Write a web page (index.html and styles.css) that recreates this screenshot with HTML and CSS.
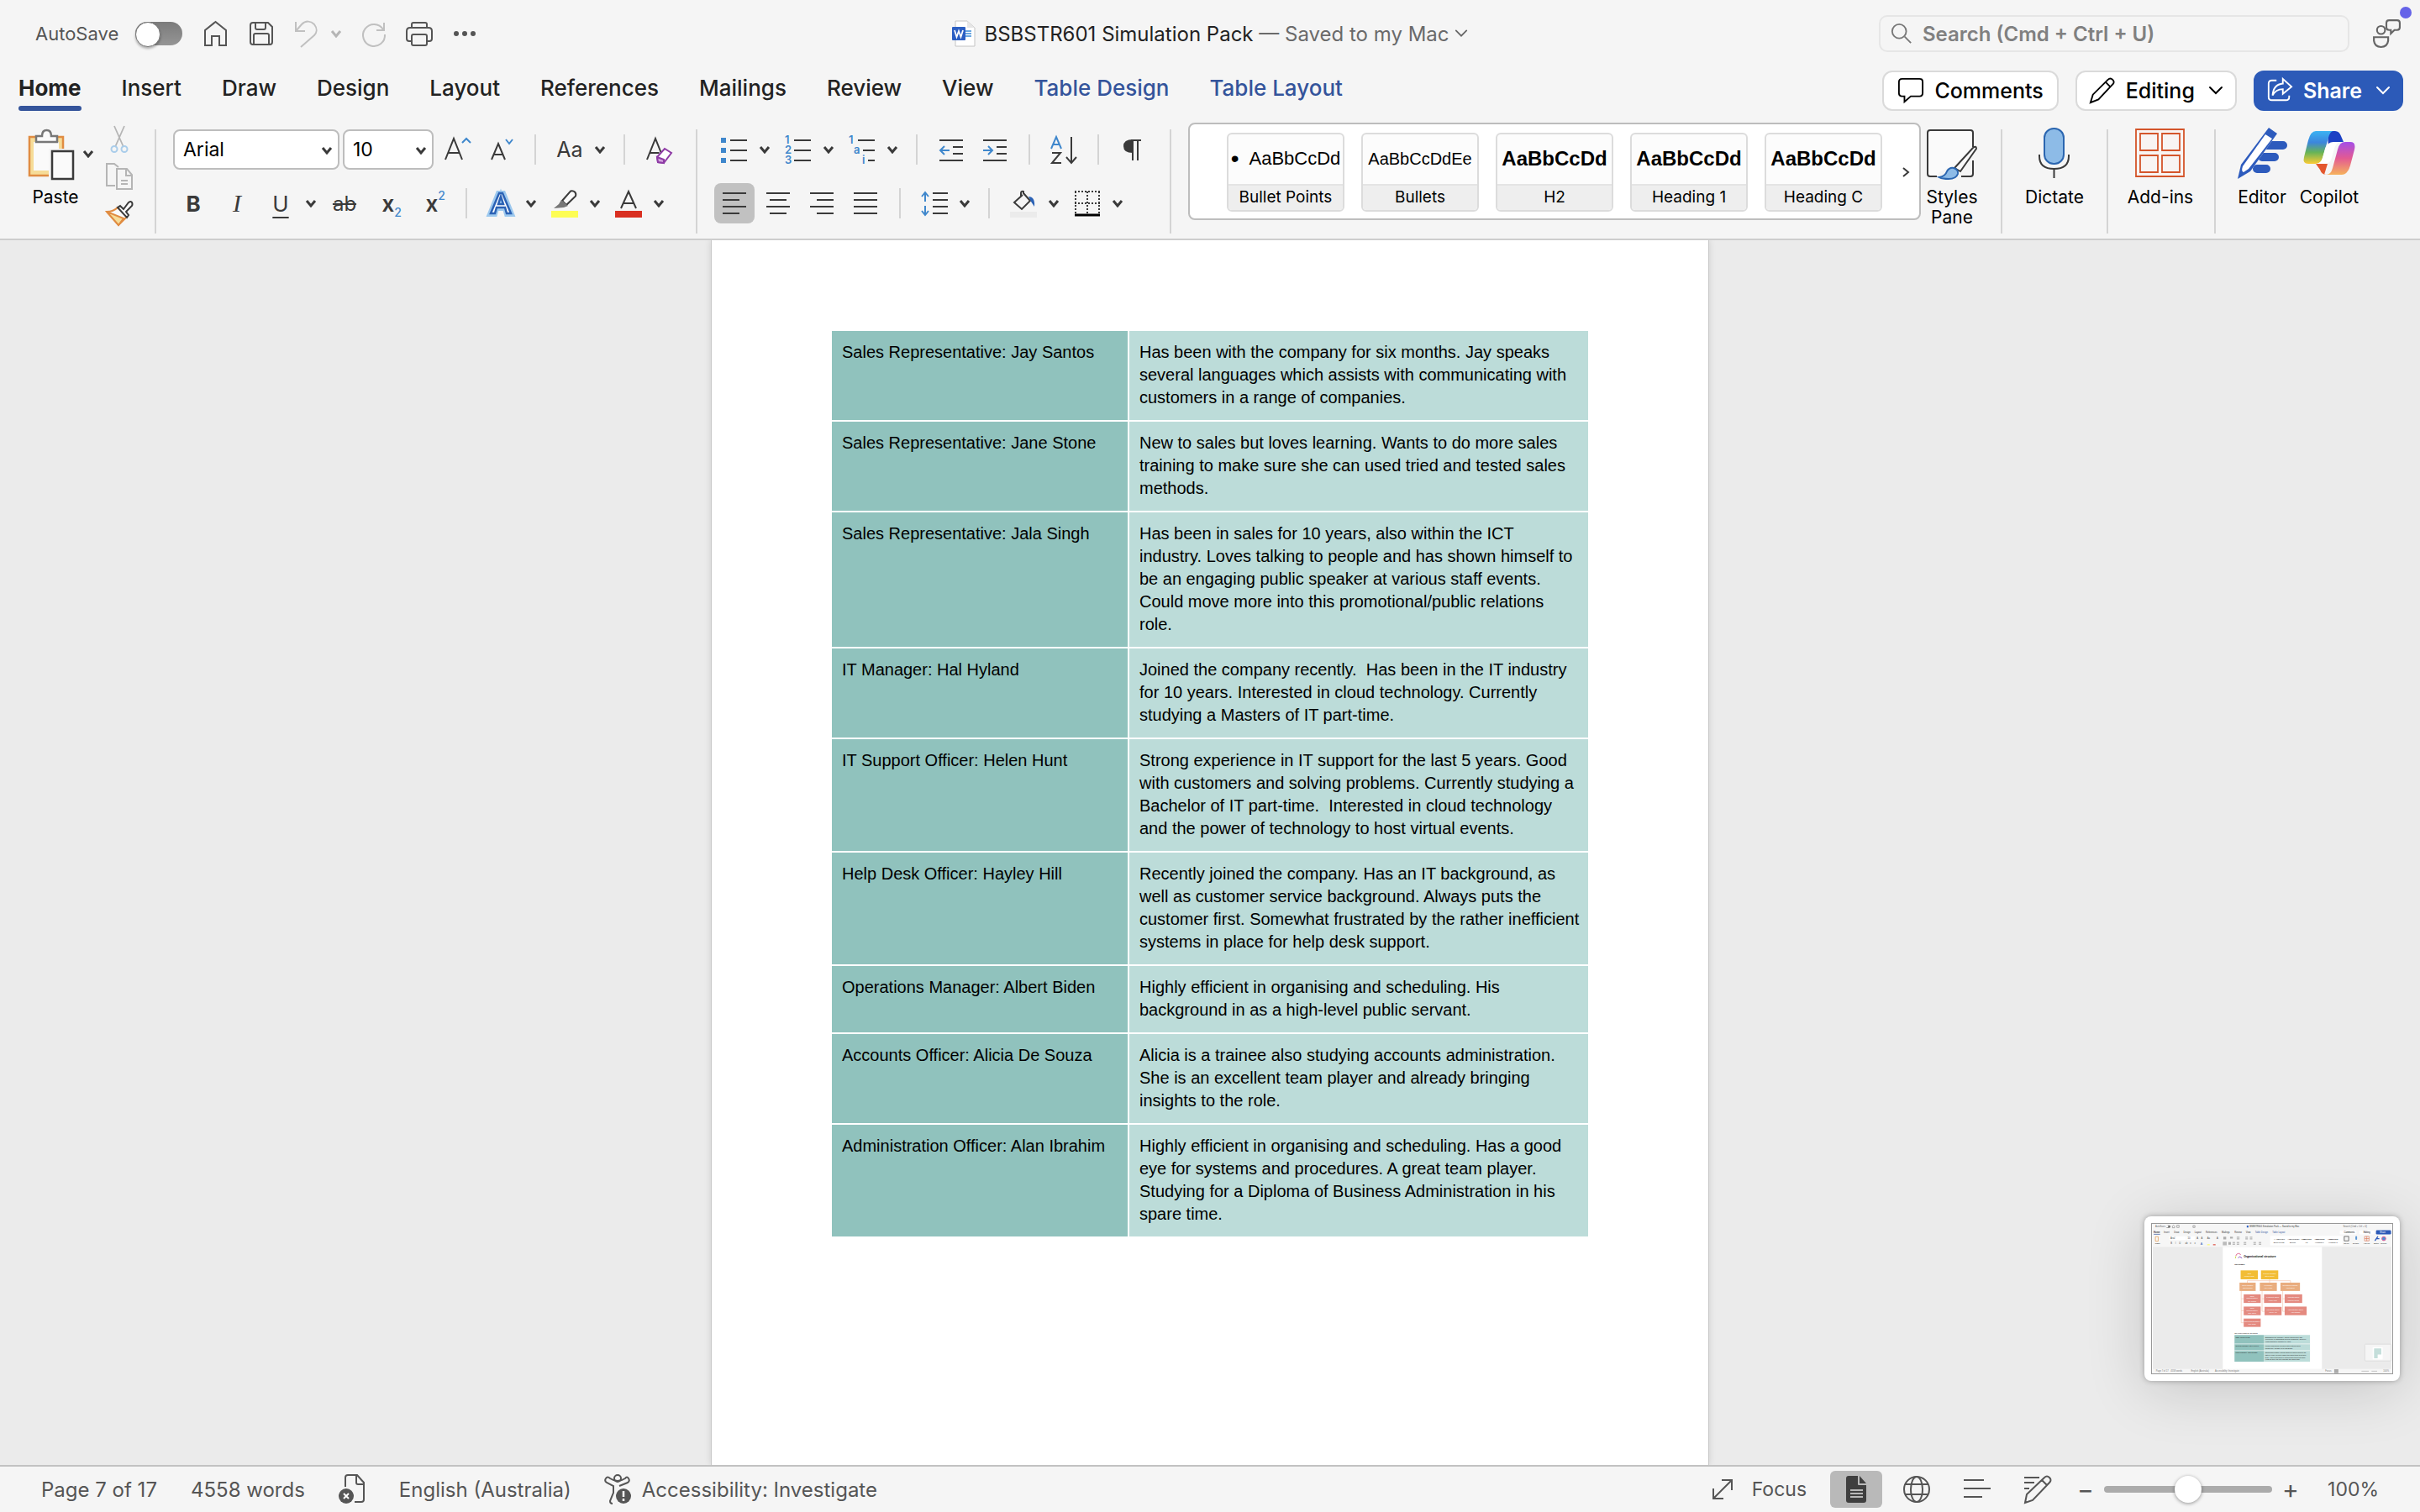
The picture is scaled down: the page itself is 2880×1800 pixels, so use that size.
FILE: index.html
```html
<!DOCTYPE html>
<html lang="en-AU">
<head>
<meta charset="UTF-8">
<meta name="viewport" content="width=device-width,initial-scale=1.0">
<title>BSBSTR601 Simulation Pack</title>
<link rel="stylesheet" href="styles.css">
</head>
<body>

<!-- shared symbols -->
<svg class="defs" width="0" height="0" aria-hidden="true">
  <symbol id="caret" viewBox="0 0 14 10"><path d="M2 2l5 6 5-6" fill="none" stroke="currentColor" stroke-width="3"/></symbol>
  <symbol id="chev" viewBox="0 0 18 12"><path d="M2 2l7 7 7-7" fill="none" stroke="currentColor" stroke-width="2" stroke-linecap="round"/></symbol>
</svg>

<header>
  <!-- ====== Title bar ====== -->
  <div class="titlebar">
    <div class="quick">
      <label class="autosave">AutoSave <input type="checkbox" class="toggle"></label>
      <button class="qbtn" aria-label="Home"><svg viewBox="0 0 32 32"><path d="M3 30V12L15.500 2 28 12v18h-8V19h-9v11z"/></svg></button>
      <button class="qbtn" aria-label="Save"><svg viewBox="0 0 32 32"><path d="M6 3h18l5 5v18q0 3-3 3H6q-3 0-3-3V6q0-3 3-3zM9 3v6q0 2 2 2h8q2 0 2-2V3M7 29V18q0-2 2-2h14q2 0 2 2v11"/></svg></button>
      <div class="undo">
        <button class="qbtn dim" aria-label="Undo"><svg viewBox="0 0 32 32"><path d="M3 2v11h11M3 13l7-8c5-5 11-4 15 0 4 5 3 10 0 13L9 32"/></svg></button>
        <button class="drop dim" aria-label="Undo history"><svg><use href="#caret"/></svg></button>
      </div>
      <button class="qbtn dim" aria-label="Redo"><svg viewBox="0 0 32 32"><path d="M28 3v9h-9M27 11A13 13 0 1 0 29 17"/></svg></button>
      <button class="qbtn" aria-label="Print"><svg viewBox="0 0 32 32"><path d="M7 9V5q0-2 2-2h14q2 0 2 2v4M7 25H4q-3 0-3-3v-9q0-4 4-4h22q4 0 4 4v9q0 3-3 3h-3M9 17h14q2 0 2 2v9q0 2-2 2H9q-2 0-2-2v-9q0-2 2-2z"/></svg></button>
      <button class="qbtn" aria-label="More"><svg viewBox="0 0 32 32" class="solid"><circle cx="6" cy="16" r="3"/><circle cx="16" cy="16" r="3"/><circle cx="26" cy="16" r="3"/></svg></button>
    </div>

    <button class="docname">
      <svg class="wordicon" viewBox="0 0 28 32"><path d="M4 1h14l9 8v22H4z" fill="#fff" stroke="#c4c4c4" stroke-width="1"/><path d="M18 1l9 8h-9z" fill="#e6e6e6" stroke="none"/><path d="M16 13h7M16 16h7M16 19h7" stroke="#3b8ad8" stroke-width="1.500"/><rect y="8" width="16" height="16" rx="1" fill="#2c5fc3" stroke="none"/><path d="M3 12l2.500 8L8 13l2.500 7L13 12" fill="none" stroke="#fff" stroke-width="1.800"/></svg>
      <span>BSBSTR601 Simulation Pack <i>— Saved to my Mac</i></span>
      <svg class="chev"><use href="#chev"/></svg>
    </button>

    <div class="right">
      <label class="search">
        <svg viewBox="0 0 28 28"><circle cx="11" cy="11" r="9"/><path d="M18 18l8 8"/></svg>
        <input type="text" placeholder="Search (Cmd + Ctrl + U)" aria-label="Search">
      </label>
      <button class="people" aria-label="Feedback">
        <svg viewBox="0 0 32 32"><circle cx="10" cy="12" r="4.500"/><path d="M2 20h16v4q-1 7-8 7t-8-7zM19 1h9q3 0 3 3v5q0 3-3 3h-3l-4 4v-4h-2q-3 0-3-3V4q0-3 3-3z"/></svg>
        <span class="dot"></span>
      </button>
    </div>
  </div>

  <!-- ====== Tabs ====== -->
  <div class="tabrow">
    <nav class="tabs">
      <a href="#" class="active">Home</a>
      <a href="#">Insert</a>
      <a href="#">Draw</a>
      <a href="#">Design</a>
      <a href="#">Layout</a>
      <a href="#">References</a>
      <a href="#">Mailings</a>
      <a href="#">Review</a>
      <a href="#">View</a>
      <a href="#" class="ctx">Table Design</a>
      <a href="#" class="ctx">Table Layout</a>
    </nav>
    <div class="actions">
      <button class="action comments"><svg viewBox="0 0 34 34"><path d="M6 2h22q4 0 4 4v14q0 4-4 4H17l-8 7v-7H6q-4 0-4-4V6q0-4 4-4z"/></svg>Comments</button>
      <button class="action editing"><svg viewBox="0 0 34 34"><path d="M2 32l3-10L24 3q3-3 6 0t0 6L12 28zM21 6l6 6"/></svg>Editing<svg class="chev"><use href="#chev"/></svg></button>
      <button class="action share"><svg viewBox="0 0 34 34"><path d="M13 4H7Q3 4 3 8v17q0 4 4 4h18q4 0 4-4v-2M21 2l11 10-11 9v-6q-9 0-13 8Q9 9 21 8z"/></svg>Share<svg class="chev"><use href="#chev"/></svg></button>
    </div>
  </div>

  <!-- ====== Ribbon ====== -->
  <div class="ribbon">
    <div class="clip">
      <div class="paste">
        <button class="big">
          <svg viewBox="0 0 56 60"><path d="M1 9h40v46H1z" fill="#f6dc98" stroke="#e08c42" stroke-width="2.500"/><path d="M6 15h30v34H6z" fill="#fafafa"/><path d="M9 15V8h7q0-7 5.500-7T27 8h7v7z" fill="#fafafa" stroke="#777" stroke-width="2.500"/><path d="M24 23h32v37H24z" fill="#f5f5f5"/><path d="M28 26h25v33H28z" fill="#fafafa" stroke="#3a3a3a" stroke-width="2.500"/></svg>
          <span>Paste</span>
        </button>
        <button class="drop" aria-label="Paste options"><svg><use href="#caret"/></svg></button>
      </div>
      <div class="clipcol">
        <button class="ic" aria-label="Cut"><svg viewBox="0 0 32 32"><path d="M10 0l11 25M22 0L11 25" stroke="#b5b5b5" stroke-width="1.800"/><g stroke="#aacdea"><circle cx="10" cy="27.500" r="3.500"/><circle cx="22" cy="27.500" r="3.500"/></g></svg></button>
        <button class="ic pale" aria-label="Copy"><svg viewBox="0 0 32 32"><path d="M11 27H1V1h9l5 4M13 7h12l6 7v17H13zM24 7v8h7M18 21h8M18 25h8"/></svg></button>
        <button class="ic" aria-label="Format painter"><svg viewBox="0 0 32 32"><path d="M1 14q8 0 13-5l11 11-10 10z" fill="#fafafa" stroke="#e08c42"/><path d="M1 14l20 8-6 8z" fill="#f6dc98" stroke="#e08c42"/><path d="M14 9l3-2 4 4 6-8q3-2 4 0t0 4l-7 7 3 4-2 3z" fill="#fafafa"/></svg></button>
      </div>
    </div>
    <div class="vsep first"></div>

    <div class="group font">
      <div class="row">
        <div class="combo fontname"><select aria-label="Font"><option>Arial</option></select><svg><use href="#caret"/></svg></div>
        <div class="combo fontsize"><select aria-label="Font size"><option>10</option></select><svg><use href="#caret"/></svg></div>
        <button class="ic first" aria-label="Increase font size"><svg viewBox="0 0 32 32"><path d="M2 28L12 3l10 25M5.500 20h13"/><path class="blue" d="M22 8l5-5 5 5"/></svg></button>
        <button class="ic" aria-label="Decrease font size"><svg viewBox="0 0 32 32"><path d="M5 28l8-19 8 19M8 22h10"/><path class="blue" d="M22 4l4 5 4-5"/></svg></button>
        <div class="sep"></div>
        <div class="split"><button class="ic glyph case">Aa</button><button class="drop" aria-label="Case options"><svg><use href="#caret"/></svg></button></div>
        <div class="sep"></div>
        <button class="ic" aria-label="Clear formatting"><svg viewBox="0 0 32 32"><path d="M2 28L12 3l8 20M5.500 20h11"/><path d="M14 25l9-10 8 5-9 12-7-1z" fill="#fff" stroke="#8e3ba5"/><path d="M14 25l8 3v4l-7-1z" fill="#d6a5e0" stroke="#8e3ba5"/></svg></button>
      </div>
      <div class="row indent">
        <button class="ic glyph bold">B</button>
        <button class="ic glyph ital">I</button>
        <div class="split"><button class="ic glyph under">U</button><button class="drop" aria-label="Underline style"><svg><use href="#caret"/></svg></button></div>
        <button class="ic glyph strike">ab</button>
        <button class="ic glyph script">x<sub>2</sub></button>
        <button class="ic glyph script">x<sup>2</sup></button>
        <div class="sep"></div>
        <div class="split"><button class="ic" aria-label="Text effects"><svg viewBox="0 0 32 32"><path d="M3 29L13 4h6l10 25h-6l-2-7H11l-2 7zM13 17h6l-3-9z" fill="#fff" stroke="#9cc8ee" stroke-width="6"/><path d="M4 28L14 4h4l10 24h-5l-2-7H11l-2 7zM13 17h6l-3-9z" fill="#fff" stroke="#2b62b5" stroke-width="2.500"/></svg></button><button class="drop" aria-label="Text effect options"><svg><use href="#caret"/></svg></button></div>
        <div class="split"><button class="ic" aria-label="Highlight"><svg viewBox="0 0 32 32"><path d="M13 13L23 1.500q3-1 5 1t1 5L18 18z" fill="#fafafa"/><path d="M12 12l8 7-5 2-12 1 6-5z" fill="#777" stroke="none"/><path d="M0 25h32v8H0z" fill="#fdfd54" stroke="none"/></svg></button><button class="drop" aria-label="Highlight colour"><svg><use href="#caret"/></svg></button></div>
        <div class="split"><button class="ic" aria-label="Font colour"><svg viewBox="0 0 32 32"><path d="M7 22L16 2l9 20M10 16h12"/><path d="M0 25h32v8H0z" fill="#d92f21" stroke="none"/></svg></button><button class="drop" aria-label="Font colour options"><svg><use href="#caret"/></svg></button></div>
      </div>
    </div>
    <div class="vsep wide"></div>

    <div class="group para">
      <div class="row">
        <div class="split"><button class="ic" aria-label="Bullets"><svg viewBox="0 0 32 32"><path d="M11 5h20M11 17h20M11 29h20"/><path d="M0 2h6v6H0zM0 14h6v6H0zM0 26h6v6H0z" fill="#3f87cc" stroke="none"/></svg></button><button class="drop" aria-label="Bullet library"><svg><use href="#caret"/></svg></button></div>
        <div class="split"><button class="ic" aria-label="Numbering"><svg viewBox="0 0 32 32"><path d="M11 5h20M11 17h20M11 29h20"/><g class="num"><text x="0" y="9">1</text><text x="0" y="21">2</text><text x="0" y="33">3</text></g></svg></button><button class="drop" aria-label="Number library"><svg><use href="#caret"/></svg></button></div>
        <div class="split"><button class="ic" aria-label="Multilevel list"><svg viewBox="0 0 32 32"><path d="M11 5h20M17 17h14M23 29h8"/><g class="num"><text x="0" y="9">1</text><text x="6" y="21">a</text><text x="16" y="33">i</text></g></svg></button><button class="drop" aria-label="List library"><svg><use href="#caret"/></svg></button></div>
        <div class="sep"></div>
        <button class="ic" aria-label="Decrease indent"><svg viewBox="0 0 32 32"><path d="M2 5h28M18 13h12M18 21h12M2 29h28"/><path class="blue" d="M14 17H3M8 12l-5 5 5 5"/></svg></button>
        <button class="ic" aria-label="Increase indent"><svg viewBox="0 0 32 32"><path d="M2 5h28M18 13h12M18 21h12M2 29h28"/><path class="blue" d="M2 17h11M8 12l5 5-5 5"/></svg></button>
        <div class="sep"></div>
        <button class="ic" aria-label="Sort"><svg viewBox="0 0 32 32"><path class="blue" d="M1 15L7 1l6 14M3 10h8"/><path d="M2 20h10L2 32h11M25 1v30M19 25l6 7 6-7"/></svg></button>
        <div class="sep"></div>
        <button class="ic" aria-label="Show formatting marks"><svg viewBox="0 0 32 32"><path d="M16 5v24M22 5v24M14 5h12"/><path d="M16 5q-10 0-10 7t10 7z" fill="#3a3a3a"/></svg></button>
      </div>
      <div class="row">
        <button class="ic active" aria-label="Align left"><svg viewBox="0 0 32 32"><path d="M2 4h28M2 12h20M2 20h28M2 28h20"/></svg></button>
        <button class="ic" aria-label="Align centre"><svg viewBox="0 0 32 32"><path d="M2 4h28M6 12h20M2 20h28M6 28h20"/></svg></button>
        <button class="ic" aria-label="Align right"><svg viewBox="0 0 32 32"><path d="M2 4h28M10 12h20M2 20h28M10 28h20"/></svg></button>
        <button class="ic" aria-label="Justify"><svg viewBox="0 0 32 32"><path d="M2 4h28M2 12h28M2 20h28M2 28h28"/></svg></button>
        <div class="sep"></div>
        <div class="split"><button class="ic" aria-label="Line spacing"><svg viewBox="0 0 32 32"><path d="M14 4h18M14 12h18M14 20h18M14 28h18"/><path class="blue" d="M5 14V4M1 8l4-5 4 5M5 19v10M1 25l4 5 4-5"/></svg></button><button class="drop" aria-label="Line spacing options"><svg><use href="#caret"/></svg></button></div>
        <div class="sep"></div>
        <div class="split"><button class="ic" aria-label="Shading"><svg viewBox="0 0 32 32"><path d="M15 6L5 15l9 8 10-10-8-9V2q-3-1-3 2v4"/><path d="M22 8q8 0 7 12l-4-6z" fill="#2b62b5" stroke="none"/><path d="M0 26h32v7H0z" fill="#ebebeb" stroke="none"/></svg></button><button class="drop" aria-label="Shading colour"><svg><use href="#caret"/></svg></button></div>
        <div class="split"><button class="ic" aria-label="Borders"><svg viewBox="0 0 32 32"><path d="M1 2h30M1 16h30M2 2v26M16 2v26M30 2v26" stroke-dasharray="2 2"/><path d="M1 30h30" stroke="#000" stroke-width="3"/></svg></button><button class="drop" aria-label="Border options"><svg><use href="#caret"/></svg></button></div>
      </div>
    </div>
    <div class="vsep gal"></div>

    <div class="gallery">
      <button class="card"><span class="sample bp"><b>•</b>AaBbCcDd</span><span class="name">Bullet Points</span></button>
      <button class="card"><span class="sample bl">AaBbCcDdEe</span><span class="name">Bullets</span></button>
      <button class="card"><span class="sample hd">AaBbCcDd</span><span class="name">H2</span></button>
      <button class="card"><span class="sample hd">AaBbCcDd</span><span class="name">Heading 1</span></button>
      <button class="card"><span class="sample hd">AaBbCcDd</span><span class="name">Heading C</span></button>
      <button class="next" aria-label="More styles"><svg viewBox="0 0 10 14"><path d="M2 2l6 5-6 5"/></svg></button>
    </div>

    <button class="big tool styles">
      <svg viewBox="0 0 60 60"><path d="M12 56H4q-3 0-3-3V4q0-3 3-3h48q3 0 3 3v15l-20 22-20 10z" fill="#fafafa"/><path d="M12 56H4q-3 0-3-3V4q0-3 3-3h48q3 0 3 3v17M55 37v16q0 3-3 3H41" fill="none" stroke="#3a3a3a" stroke-width="2"/><path d="M33 46l22-24q4-3 4 1L40 50z" fill="#fafafa" stroke="#3a3a3a" stroke-width="2"/><path d="M15 57q7-1 9-7 3-5 8-4 6 2 5 7-2 6-11 6-7 0-11-2z" fill="#8dbbe7" stroke="#2b66b0" stroke-width="2"/></svg>
      <span>Styles Pane</span>
    </button>
    <div class="vsep tools"></div>
    <button class="big tool">
      <svg viewBox="0 0 60 60"><rect x="18" y="-1" width="23" height="42" rx="11" fill="#8dbbe7" stroke="#2b66b0" stroke-width="2"/><path d="M12 30v2q0 15 17.500 15T47 32v-2M29.500 47v11" fill="none" stroke="#3a3a3a" stroke-width="2"/></svg>
      <span>Dictate</span>
    </button>
    <div class="vsep tools"></div>
    <button class="big tool">
      <svg viewBox="0 0 60 60"><path d="M1 0h57v56H1zM6 5h21v20H6zM32 5h21v20H32zM6 31h21v20H6zM32 31h21v20H32z" fill="#f8f4f3" stroke="#d4552b" stroke-width="1.800"/></svg>
      <span>Add-ins</span>
    </button>
    <div class="vsep tools last"></div>
    <button class="big">
      <svg viewBox="0 0 60 60"><path d="M36 19h19M30 33h15M24 47h11" stroke="#2d5bbd" stroke-width="10" stroke-linecap="round"/><path d="M1 59l4-17L38-2l10 7-32 45z" fill="#f5f5f5"/><path d="M1 59l4-17L38-2l10 7-32 45z" fill="#2d5bbd"/><path d="M7 44L34 6l8 5-28 36-6 4q-3-1-1-7z" fill="#fff"/></svg>
      <span>Editor</span>
    </button>
    <button class="big">
      <svg viewBox="0 0 60 60">
        <defs>
          <linearGradient id="cA" x1="0" y1="0" x2="0" y2="1"><stop offset="0" stop-color="#3bb3f3"/><stop offset=".35" stop-color="#3c86dd"/><stop offset=".65" stop-color="#67b457"/><stop offset="1" stop-color="#fbcb35"/></linearGradient>
          <linearGradient id="cB" x1="0" y1="0" x2="0" y2="1"><stop offset="0" stop-color="#a44ee8"/><stop offset=".5" stop-color="#e35a92"/><stop offset="1" stop-color="#f6b25c"/></linearGradient>
        </defs>
        <path d="M28 2h9q5 0 7 6l3 7h-9q-7 0-9 8z" fill="#1b40c4"/>
        <path d="M14 41h14l-4 13h3q-6 0-8-6z" fill="#e4572e"/>
        <path d="M14 2h21q-4 0-6 8l-7 24q-2 7-8 7H5q-7 0-5-8l5-20Q8 2 14 2z" fill="url(#cA)"/>
        <path d="M26 54q6 0 8-8l6-22q2-9 9-9h6q7 0 5 9l-5 19q-3 11-10 11z" fill="url(#cB)"/>
        <path d="M22 41q6 0 8-7l6-19h4q-6 1-8 10z" fill="#fff"/>
        <path d="M14 41q6 0 8-7l3-11q3-8 10-8h8q-5 1-7 8l-3 11q-2 7-8 7z" fill="#fff"/>
      </svg>
      <span>Copilot</span>
    </button>
  </div>
</header>

<!-- ====== Document ====== -->
<main class="canvas">
  <article class="page">
    <table>
      <tbody>
        <tr><td>Sales Representative: Jay Santos</td><td>Has been with the company for six months. Jay speaks several languages which assists with communicating with customers in a range of companies.</td></tr>
        <tr><td>Sales Representative: Jane Stone</td><td>New to sales but loves learning. Wants to do more sales training to make sure she can used tried and tested sales methods.</td></tr>
        <tr><td>Sales Representative: Jala Singh</td><td>Has been in sales for 10 years, also within the ICT industry. Loves talking to people and has shown himself to be an engaging public speaker at various staff events. Could move more into this promotional/public relations role.</td></tr>
        <tr><td>IT Manager: Hal Hyland</td><td>Joined the company recently.&nbsp; Has been in the IT industry for 10 years. Interested in cloud technology. Currently studying a Masters of IT part-time.</td></tr>
        <tr><td>IT Support Officer: Helen Hunt</td><td>Strong experience in IT support for the last 5 years. Good with customers and solving problems. Currently studying a Bachelor of IT part-time.&nbsp; Interested in cloud technology and the power of technology to host virtual events.</td></tr>
        <tr><td>Help Desk Officer: Hayley Hill</td><td>Recently joined the company. Has an IT background, as well as customer service background. Always puts the customer first. Somewhat frustrated by the rather inefficient systems in place for help desk support.</td></tr>
        <tr><td>Operations Manager: Albert Biden</td><td>Highly efficient in organising and scheduling. His background in as a high-level public servant.</td></tr>
        <tr><td>Accounts Officer: Alicia De Souza</td><td>Alicia is a trainee also studying accounts administration. She is an excellent team player and already bringing insights to the role.</td></tr>
        <tr><td>Administration Officer: Alan Ibrahim</td><td>Highly efficient in organising and scheduling. Has a good eye for systems and procedures. A great team player. Studying for a Diploma of Business Administration in his spare time.</td></tr>
      </tbody>
    </table>
  </article>

  <!-- floating screen capture -->
  <figure class="capture">
    <svg viewBox="0 0 858 537">
      <rect width="858" height="537" fill="#ebebeb"/>
      <rect width="858" height="83" fill="#f6f6f6"/>
      <g font-size="8" fill="#666">
        <text x="10" y="13">AutoSave</text><text x="348" y="13" fill="#333">BSBSTR601 Simulation Pack — Saved to my Mac</text><text x="684" y="13">Search (Cmd + Ctrl + U)</text>
      </g>
      <rect x="48" y="5" width="16" height="9" rx="4" fill="#777"/><circle cx="52" cy="9" r="4" fill="#fff"/>
      <path d="M71 14V8l4-4 4 4v6zM87 5h8v8h-8zM145 6h7v7h-7z" fill="none" stroke="#888"/>
      <rect x="338" y="6" width="6" height="7" fill="#2c5fc3"/>
      <g font-size="8" fill="#333">
        <text x="4" y="32" font-weight="700">Home</text><text x="40" y="32">Insert</text><text x="77" y="32">Draw</text><text x="111" y="32">Design</text><text x="151" y="32">Layout</text><text x="191" y="32">References</text><text x="248" y="32">Mailings</text><text x="294" y="32">Review</text><text x="335" y="32">View</text><g fill="#34549b"><text x="368" y="32">Table Design</text><text x="430" y="32">Table Layout</text></g>
      </g>
      <rect x="4" y="36" width="23" height="2" fill="#34549b"/>
      <rect x="672" y="24" width="60" height="14" rx="4" fill="#fff"/><rect x="742" y="24" width="54" height="14" rx="4" fill="#fff"/><rect x="802" y="23" width="54" height="15" rx="4" fill="#2c5ab8"/>
      <g font-size="8"><text x="687" y="34">Comments</text><text x="757" y="34">Editing</text><text x="815" y="34" fill="#fff">Share</text></g>
      <path d="M10 46h10v16H10z" fill="#fafafa" stroke="#e2903e" stroke-width="2"/><text x="9" y="71" font-size="7">Paste</text>
      <rect x="60" y="45" width="60" height="13" fill="#fff"/><rect x="122" y="45" width="30" height="13" fill="#fff"/>
      <g font-size="8" fill="#444"><text x="64" y="54">Arial</text><text x="126" y="54">10</text><text x="158" y="55">A</text><text x="174" y="55">A</text><text x="196" y="55">Aa</text><text x="230" y="55">A</text><text x="65" y="73">B</text><text x="81" y="73">I</text><text x="95" y="73">U</text><text x="117" y="73">ab</text><text x="134" y="73">x</text><text x="150" y="73">x</text></g>
      <path d="M254 48h10M254 51h10M254 54h10M278 48h10M278 51h10M302 48h10M302 54h10M333 48h9M333 54h9M349 48h9M349 54h9M272 67h9M272 70h9M272 73h9M287 67h9M287 73h9M302 67h9M302 73h9M327 67h9M327 73h9M362 67h9M362 73h9M381 67h9M381 73h9" stroke="#777"/>
      <rect x="252" y="64" width="14" height="13" fill="#bbb"/><text x="172" y="74" font-size="11" fill="#2b62b5">A</text>
      <path d="M196 75h9" stroke="#fdfd54" stroke-width="3"/><path d="M217 75h9" stroke="#d92f21" stroke-width="3"/>
      <rect x="422" y="43" width="260" height="34" fill="#fff"/>
      <g font-size="7" fill="#222"><text x="436" y="57">• AaBbCcDd</text><text x="484" y="57">AaBbCcDdEe</text><g font-weight="700"><text x="533" y="57">AaBbCcDd</text><text x="581" y="57">AaBbCcDd</text><text x="629" y="57">AaBbCcDd</text></g><text x="434" y="70">Bullet Points</text><text x="492" y="70">Bullets</text><text x="548" y="70">H2</text><text x="583" y="70">Heading 1</text><text x="631" y="70">Heading C</text><text x="686" y="71">Styles</text><text x="719" y="71">Dictate</text><text x="756" y="71">Add-ins</text><text x="794" y="71">Editor</text><text x="818" y="71">Copilot</text></g>
      <path d="M688 45h16v16h-16z" fill="none" stroke="#3a3a3a"/><rect x="728" y="44" width="6" height="13" rx="3" fill="#5c98d6"/><path d="M761 45h16v16h-16zM769 45v16M761 53h16" fill="none" stroke="#dc7450" stroke-width="2"/><path d="M798 61l11-16M804 53h10" stroke="#2d5bbd" stroke-width="4"/><circle cx="830" cy="53" r="7" fill="#4b92d6" stroke="#e35a92" stroke-width="3"/>
      <rect x="252" y="83" width="356" height="439" fill="#fff"/>
      <path d="M297 124l2-8" stroke="#c9d84a" stroke-width="3"/><path d="M299 114l4-6 7-2 7 5" fill="none" stroke="#d9477a" stroke-width="3" stroke-dasharray="6 2"/><path d="M307 122l6-4 8 5" fill="none" stroke="#8a55c0" stroke-width="3"/>
      <g font-weight="700"><text x="327" y="120" font-size="10">Organisational structure</text><text x="294" y="149" font-size="7">Our people</text></g>
      <path d="M340 213v-9h155v9M420 198v15M318 240v115h10M318 269h10M318 312h10M393 240v74h10M393 269h10M467 240v74h10M467 269h10" fill="none" stroke="#f5c5ae" stroke-width="2"/>
      <g fill="#f2bd35"><rect x="316" y="167" width="62" height="32"/><rect x="389" y="167" width="62" height="32"/></g>
      <g fill="#e9ad7f"><rect x="312" y="211" width="58" height="30"/><rect x="385" y="211" width="61" height="30"/><rect x="459" y="211" width="70" height="30"/></g>
      <g fill="#e48a80"><rect x="327" y="253" width="61" height="31"/><rect x="400" y="253" width="62" height="31"/><rect x="474" y="253" width="63" height="31"/><rect x="327" y="297" width="61" height="31"/><rect x="402" y="298" width="61" height="30"/><rect x="474" y="297" width="79" height="31"/><rect x="327" y="340" width="61" height="30"/></g>
      <g font-size="6" fill="#fff" text-anchor="middle"><text x="347" y="180">CEO</text><text x="347" y="191">Louise Lucas</text><text x="420" y="180">General Manager</text><text x="420" y="191">Steve Green</text><text x="341" y="223">Sales Manager</text><text x="341" y="233">Jack Durham</text><text x="415" y="223">IT Manager</text><text x="415" y="233">Hal Hyland</text><text x="494" y="223">Operations Manager</text><text x="494" y="233">Albert Biden</text><text x="357" y="262">Sales</text><text x="357" y="270">Representative</text><text x="357" y="280">Jay Santos</text><text x="431" y="266">IT Support Officer</text><text x="431" y="277">Helen Hunt</text><text x="505" y="266">Accounts Officer</text><text x="505" y="277">Alicia De Souza</text><text x="357" y="306">Sales</text><text x="357" y="314">Representative</text><text x="357" y="324">Jane Stone</text><text x="432" y="311">Help Desk Officer</text><text x="432" y="321">Hayley Hill</text><text x="513" y="310">Administration Officer</text><text x="513" y="320">Alan Ibrahim</text><text x="357" y="352">Sales Representative</text><text x="357" y="363">Jala Singh</text></g>
      <text x="294" y="395" font-size="6">Our people skills are as follows:</text>
      <rect x="294" y="399" width="106" height="96" fill="#90c2bd"/><rect x="400" y="399" width="165" height="96" fill="#bcdcd9"/><path d="M294 431h271M294 455h271" stroke="#fff"/>
      <g font-size="6" fill="#222"><text x="298" y="409">CEO: Louise Lucas</text><text x="298" y="441">General Manager: Steve Green</text><text x="298" y="465">Sales Manager: Jack Durham</text><text x="404" y="409">Established the company. Social entrepreneur with</text><text x="404" y="417">experience in establishing several companies. Spent 10</text><text x="404" y="425">years working in volunteer in Africa.</text><text x="404" y="441">Former high school principal with a strong social</text><text x="404" y="449">conscience. Member of CHSO Board.</text><text x="404" y="465">Strong sales history having worked in sales roles for the</text><text x="404" y="474">last 10 years. Loves to inspire the sales team to do their</text><text x="404" y="482">best. Always interested in learning and improving skills.</text><text x="404" y="490">Head for this year is to increase the sales team.</text></g>
      <rect x="762" y="432" width="94" height="60" rx="3" fill="#f5f5f5" stroke="#d4d4d4" stroke-width="2"/><rect x="790" y="443" width="36" height="44" fill="#fff"/><path d="M795 447h26v22h-26zM795 469h13v14h-13z" fill="#c4deda"/>
      <rect y="521" width="858" height="16" fill="#f6f6f6"/>
      <g font-size="8" fill="#777"><text x="12" y="532">Page 7 of 17</text><text x="65" y="532">4558 words</text><text x="138" y="532">English (Australia)</text><text x="224" y="532">Accessibility: Investigate</text><text x="620" y="532">Focus</text><text x="828" y="532">100%</text></g>
      <rect x="652" y="522" width="15" height="14" fill="#aaa"/><path d="M750 529h26M786 529h20" stroke="#aaa" stroke-width="2"/>
    </svg>
  </figure>
</main>

<!-- ====== Status bar ====== -->
<footer class="status">
  <div class="info">
    <button>Page 7 of 17</button>
    <button>4558 words</button>
    <button aria-label="Spelling"><svg viewBox="0 0 32 36"><path d="M8 15V4q0-3 3-3h11l8 9v20q0 3-3 3h-8M21 1v9q0 2 2 2h7"/><circle cx="9" cy="26" r="9" fill="#555" stroke="none"/><path d="M6 23l6 6M12 23l-6 6" stroke="#fff"/></svg></button>
    <button>English (Australia)</button>
    <button class="acc"><svg viewBox="0 0 32 36"><circle cx="15" cy="5" r="4"/><path d="M17 14l10-4q3-2 1-5t-4 0q-9 6-18 0-3-3-5 0t1 5l8 4v8l-4 10q0 3 3 3"/><circle cx="22" cy="26" r="9" fill="#555" stroke="none"/><path d="M22 20v7M22 29v3" stroke="#fff" stroke-width="2.500"/></svg>Accessibility: Investigate</button>
  </div>
  <div class="views">
    <button class="focus"><svg viewBox="0 0 26 26"><path d="M2 24L24 2M12 2h12v12M2 12v12h12"/></svg>Focus</button>
    <button class="view active" aria-label="Print layout"><svg viewBox="0 0 32 34"><path d="M7 1h11v10q0 1 1 1h9v18q0 3-3 3H7q-3 0-3-3V4q0-3 3-3zM20 1l8 9h-8z" fill="#3f3f3f" stroke="none"/><path d="M9 18h15M9 22h15M9 26h15" stroke="#b9b9b9"/></svg></button>
    <button class="view" aria-label="Web layout"><svg viewBox="0 0 32 34"><circle cx="16" cy="17" r="15"/><ellipse cx="16" cy="17" rx="7" ry="15"/><path d="M2 11h28M2 23h28"/></svg></button>
    <button class="view" aria-label="Outline"><svg viewBox="0 0 32 34"><path d="M0 6h24M0 16h32M0 26h22"/></svg></button>
    <button class="view" aria-label="Draft"><svg viewBox="0 0 32 34"><path d="M1 33l2-10L24 3q3-3 6 0t0 6L10 30zM21 6l6 6M0 3h18M0 9h12M0 16h6"/></svg></button>
    <div class="zoom">
      <button aria-label="Zoom out">−</button>
      <input type="range" min="0" max="100" value="50" aria-label="Zoom">
      <button aria-label="Zoom in">+</button>
    </div>
    <button class="pct">100%</button>
  </div>
</footer>

</body>
</html>
```

FILE: styles.css
```css
:root{
  --chrome : #f5f5f5;
  --canvas : #ebebeb;
  --line   : #cdcdcd;
  --text   : #222;
  --muted  : #555;
  --ink    : #3a3a3a;
  --blue   : #3f87cc;
  --brand  : #2c5ab8;
  --tab    : #34549b;
}
*{box-sizing:border-box;}
html,body{margin:0;height:100%;}
body{
  display:flex;flex-direction:column;overflow:hidden;
  font-family:Inter,"Liberation Sans",sans-serif;font-size:22px;color:var(--text);background:var(--canvas);
}
button,input,select{font:inherit;color:inherit;}
button{display:flex;align-items:center;justify-content:center;padding:0;border:none;background:none;}
a{color:inherit;text-decoration:none;}
svg{flex:none;display:block;fill:none;stroke:currentColor;stroke-width:2;overflow:visible;}
.defs{position:absolute;}

header{background:var(--chrome);border-bottom:2px solid var(--line);}

/* title bar */
.titlebar{display:grid;grid-template-columns:1fr auto 1fr;align-items:center;height:80px;padding:0 42px;}
.quick{display:flex;align-items:center;gap:22px;color:var(--muted);}
.autosave{display:flex;align-items:center;gap:20px;margin-right:2px;}
.toggle{
  appearance:none;width:56px;height:28px;margin:0;border-radius:14px;
  background:linear-gradient(#7b7b7b,#959595);
}
.toggle::before{
  content:'';display:block;width:28px;height:28px;border-radius:50%;
  background:#fff;border:1px solid #777;box-shadow:0 2px 3px rgba(0,0,0,.3);
}
.qbtn svg{width:32px;height:32px;}
.qbtn .solid{fill:currentColor;stroke:none;}
.dim{color:#c0c0c0;}
.undo{display:flex;align-items:center;gap:12px;}
.drop{width:14px;height:32px;color:var(--ink);}
.drop.dim{color:#b5b5b5;}
.drop svg{width:14px;height:10px;}
.docname{gap:10px;font-size:24px;}
.docname i{font-style:normal;color:#6a6a6a;}
.docname .chev{width:16px;margin-left:-4px;color:#666;}
.wordicon{width:28px;height:32px;}
.chev{width:18px;height:12px;}
.right{display:flex;justify-content:flex-end;align-items:center;gap:26px;margin-right:-20px;}
.search{
  display:flex;align-items:center;gap:12px;width:560px;height:44px;padding:0 12px;
  border:2px solid #e6e6e6;border-radius:10px;color:#777;
}
.search svg{width:26px;height:26px;}
.search input{flex:1;min-width:0;padding:2px 0;border:none;background:none;outline:none;font-size:24px;font-weight:600;}
.search input::placeholder{color:#808080;}
.people{position:relative;color:#666;}
.people svg{width:36px;height:34px;}
.dot{position:absolute;right:-12px;top:-15px;width:14px;height:14px;border-radius:50%;background:#6563e8;}

/* tabs */
.tabrow{display:flex;justify-content:space-between;height:60px;padding:4px 20px 0 22px;}
.tabs{display:flex;gap:48px;font-size:26px;font-weight:500;line-height:42px;}
.tabs a{height:48px;}
.tabs .active{font-weight:700;}
.tabs .active::after{content:'';display:block;height:6px;border-radius:3px;background:var(--tab);}
.tabs .ctx{color:var(--tab);}
.actions{display:flex;gap:20px;}
.action{
  gap:12px;height:48px;padding:0 16px;border:2px solid #dadada;border-radius:12px;
  background:#fff;color:#000;font-size:25px;font-weight:500;
}
.action svg:first-child{width:32px;height:32px;}
.action .chev{margin-left:4px;}
.editing{padding:0 14px;}
.share{padding:0 13px;background:var(--brand);border-color:var(--brand);color:#fff;font-weight:600;}

/* ribbon */
.ribbon{display:flex;align-items:flex-start;padding:14px 68px 6px 34px;}
.vsep{flex:none;width:2px;height:124px;margin:0 20px 0 28px;background:#d4d4d4;}
.vsep.first{margin-left:26px;}
.vsep.wide{margin:0 28px;}
.vsep.tools{margin:0 21px;}
.vsep.tools.last{margin:0 15px 0 23px;}
.clip{display:flex;gap:14px;}
.paste{display:flex;}
.paste .big{width:64px;}
.paste .drop{height:58px;}
.clipcol{display:flex;flex-direction:column;gap:12px;margin-top:-4px;}
.big{flex:none;flex-direction:column;justify-content:flex-start;width:80px;color:#000;font-size:21px;line-height:24px;}
.big svg{width:60px;height:60px;margin-bottom:9px;stroke:none;}
.paste .big svg{width:56px;align-self:flex-start;}
.tool{width:82px;}
.styles{width:74px;}

.group{display:flex;flex-direction:column;gap:16px;}
.row{display:flex;align-items:center;gap:20px;height:48px;}
.row.indent{padding-left:8px;}
.ic{flex:none;width:32px;height:32px;color:var(--ink);}
.ic svg{width:32px;height:32px;}
.ic.pale{color:#b5b5b5;}
.ic.active{width:48px;height:48px;margin:0 -8px;border-radius:8px;background:#c1c1c1;}
.blue{stroke:var(--blue);}
.num{fill:var(--blue);stroke:none;font-size:13px;font-weight:600;}
.split{display:flex;gap:13px;margin-right:-3px;}
.sep{width:2px;height:36px;margin:0 4px;background:#d4d4d4;}
.combo{position:relative;height:48px;}
.combo select{
  appearance:none;width:100%;height:48px;padding:0 10px;
  border:2px solid #bdbdbd;border-radius:8px;background:#fff;color:#000;font-size:23px;
}
.combo svg{position:absolute;right:8px;top:20px;width:14px;height:10px;color:var(--ink);pointer-events:none;}
.fontname{width:198px;}
.fontsize{width:108px;margin-left:-16px;}
.ic.first{margin-left:-8px;}
.glyph{font-size:26px;}
.case{font-size:25px;}
.bold{font-weight:700;}
.ital{font-family:"Liberation Serif",serif;font-style:italic;font-size:30px;}
.under{text-decoration:underline;text-underline-offset:6px;text-decoration-thickness:2px;}
.strike{font-size:24px;text-decoration:line-through;text-decoration-thickness:2px;}
.script{justify-content:flex-end;font-weight:600;}
.script sub,.script sup{color:var(--blue);font-size:14px;font-weight:500;}
.script sub{margin-top:20px;}
.script sup{margin-bottom:20px;}

/* style gallery */
.gallery{
  flex:1;display:flex;gap:20px;height:116px;margin-top:-8px;padding:10px 8px 0 44px;
  border:2px solid #bdbdbd;border-radius:8px;background:#fff;overflow:hidden;
}
.card{
  flex:none;flex-direction:column;align-items:stretch;width:140px;height:94px;
  border:2px solid #dcdcdc;border-radius:6px;overflow:hidden;color:#000;background:#fcfcfc;
}
.sample{display:flex;align-items:center;justify-content:center;height:60px;font-family:"Liberation Sans",Arial,sans-serif;white-space:pre;}
.bp{gap:12px;font-size:22px;}
.bp b{font-size:28px;font-weight:400;line-height:28px;}
.bl{font-size:20px;}
.hd{font-size:24px;font-weight:700;}
.name{height:32px;border-top:2px solid #e4e4e4;background:#eee;font-size:19px;line-height:27px;}
.next{flex:1;height:94px;color:var(--ink);}
.next svg{width:10px;height:14px;}

/* document */
.canvas{position:relative;flex:1;min-height:0;overflow:hidden;}
.page{
  width:1188px;max-width:100%;min-height:100%;margin:0 auto;padding:108px 143px 0;
  background:#fff;border:1px solid #c8c8c8;border-width:0 1px;box-shadow:0 0 8px rgba(0,0,0,.12);
}
table{width:100%;border-collapse:collapse;table-layout:fixed;font-family:"Liberation Sans",Arial,sans-serif;font-size:20px;line-height:27px;color:#000;}
td{padding:12px 10px 13px 12px;vertical-align:top;background:#bcdcd9;border-bottom:2px solid #fff;}
td:first-child{width:353px;padding-right:0;background:#90c2bd;border-right:2px solid #fff;}
tr:last-child td{border-bottom:none;}

.capture{
  position:absolute;right:24px;bottom:100px;width:304px;height:196px;margin:0;padding:8px;
  border-radius:8px;background:#fff;box-shadow:0 0 6px rgba(0,0,0,.3),0 10px 70px rgba(0,0,0,.16);
}
.capture svg{
  width:288px;height:180px;border:1px solid #999;fill:#000;stroke:none;overflow:hidden;
  font-family:"Liberation Sans",Arial,sans-serif;
}

/* status bar */
.status{
  display:flex;justify-content:space-between;align-items:center;height:56px;padding:0 49px;
  border-top:2px solid #c2c2c2;background:var(--chrome);color:var(--muted);font-size:23px;
}
.info{display:flex;align-items:center;gap:40px;font-size:24px;}
.info svg{width:32px;height:36px;}
.acc{gap:12px;}
.views{display:flex;align-items:center;gap:10px;}
.focus{gap:22px;margin-right:18px;}
.focus svg{width:26px;height:26px;}
.view{width:62px;height:44px;border-radius:6px;}
.view svg{width:32px;height:34px;}
.view.active{background:#b9b9b9;}
.zoom{display:flex;align-items:center;gap:6px;}
.zoom button{width:32px;font-size:30px;line-height:32px;}
.zoom input{appearance:none;width:200px;height:32px;margin:0;background:none;}
.zoom input::-webkit-slider-runnable-track{height:8px;border-radius:4px;background:#ababab;}
.zoom input::-webkit-slider-thumb{
  appearance:none;width:32px;height:32px;margin-top:-12px;border-radius:50%;
  background:#fff;box-shadow:0 1px 4px rgba(0,0,0,.4);
}
.pct{margin-left:18px;}
```
